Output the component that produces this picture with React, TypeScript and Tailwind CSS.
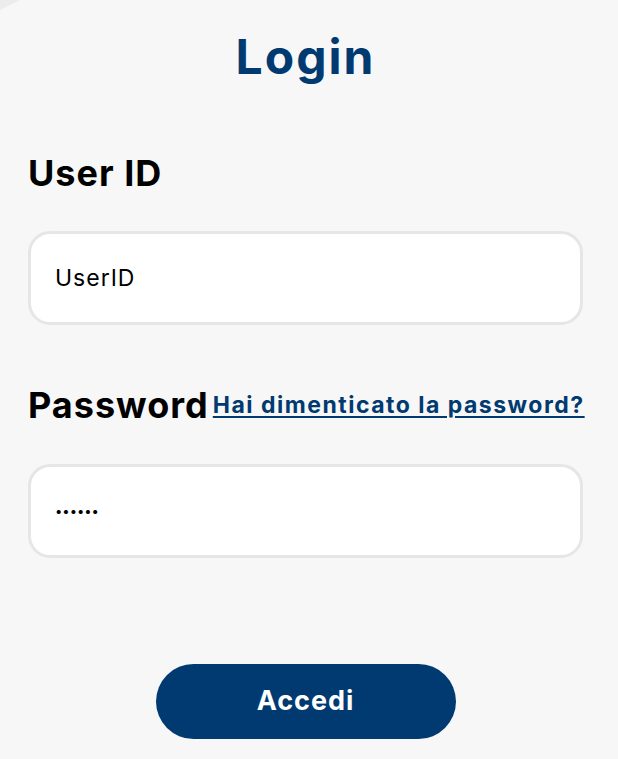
import { useState } from "react";

export default function App() {
  const [userId, setUserId] = useState("UserID");
  const [password, setPassword] = useState("••••••");

  return (
    <div className="relative min-h-screen overflow-hidden bg-[#f7f7f7] font-['Inter',sans-serif] text-black">
      {/* corner of the card behind */}
      <svg className="absolute left-0 top-0" width="24" height="14" viewBox="0 0 24 14">
        <polygon points="0,0 20,0 0,10" fill="#ececec" />
      </svg>

      <div className="pl-[28px] pr-[35px] pt-[28px]">
        <h1 className="text-center text-[48px] font-bold leading-[58px] tracking-[2px] text-[#003a70]">Login</h1>

        <label className="mt-[65px] block text-[36px] font-bold leading-[44px] tracking-[1px]">User ID</label>
        <input
          value={userId}
          onChange={(e) => setUserId(e.target.value)}
          className="mt-[36px] block h-[94px] w-full rounded-[22px] border-[3px] border-[#e6e6e6] bg-white pl-[24px] text-[23px] tracking-[1px] outline-none"
        />

        <div className="mt-[58px] flex items-center">
          <label className="text-[36px] font-bold leading-[44px] tracking-[1px]">Password</label>
          <a
            href="#"
            className="ml-[4px] whitespace-nowrap text-[23px] font-bold tracking-[1.5px] text-[#003a70] underline decoration-2 underline-offset-[3px]"
          >
            Hai dimenticato la password?
          </a>
        </div>
        <input
          value={password}
          onChange={(e) => setPassword(e.target.value)}
          className="mt-[37px] block h-[94px] w-full rounded-[22px] border-[3px] border-[#e6e6e6] bg-white pl-[24px] text-[13px] outline-none"
        />

        <div className="mt-[106px] flex justify-center">
          <button className="h-[75px] w-[300px] rounded-full bg-[#003a70] text-[27px] font-bold tracking-[1px] text-white">
            Accedi
          </button>
        </div>
      </div>
    </div>
  );
}
